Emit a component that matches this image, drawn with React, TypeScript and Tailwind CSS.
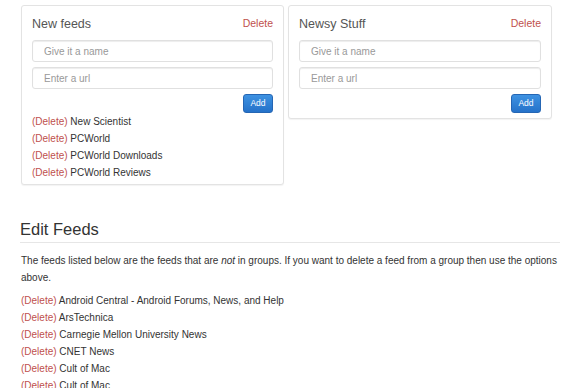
import React from "react";

const red = "text-[#c0504d]";

function Panel({ title, items }: { title: string; items: string[] }) {
  return (
    <div className="flex flex-col border border-[#e3e3e3] rounded-[3px] shadow-[0_1px_1px_rgba(0,0,0,0.05)] px-[10px] pt-[10px] bg-white w-full">
      <div className="flex items-center justify-between h-[16px]">
        <span className="text-[12.5px] text-[#555]">{title}</span>
        <span className={`text-[10.5px] ${red}`}>Delete</span>
      </div>
      <input
        className="mt-[8px] h-[22px] w-full border border-[#e0e0e0] rounded-[3px] shadow-[inset_0_1px_1px_rgba(0,0,0,0.075)] pl-[11px] text-[10px] placeholder:text-[#999] outline-none"
        placeholder="Give it a name"
      />
      <input
        className="mt-[5px] h-[22px] w-full border border-[#e0e0e0] rounded-[3px] shadow-[inset_0_1px_1px_rgba(0,0,0,0.075)] pl-[11px] text-[10px] placeholder:text-[#999] outline-none"
        placeholder="Enter a url"
      />
      <div className="flex justify-end mt-[5px]">
        <button className="h-[19px] w-[30px] rounded-[3px] border border-[#2566b4] bg-gradient-to-b from-[#3e92e2] to-[#2572c9] text-white text-[8.5px] leading-none">
          Add
        </button>
      </div>
      {items.length > 0 ? (
        <div className="flex flex-col pb-[3px]">
          {items.map((it, i) => (
            <div key={i} className="h-[17px] leading-[17px] text-[10px] text-[#333]">
              <span className={red}>(Delete)</span> {it}
            </div>
          ))}
        </div>
      ) : (
        <div className="h-[5px]" />
      )}
    </div>
  );
}

export default function App() {
  const feeds = [
    "Android Central - Android Forums, News, and Help",
    "ArsTechnica",
    "Carnegie Mellon University News",
    "CNET News",
    "Cult of Mac",
    "Cult of Mac",
  ];
  return (
    <div
      className="w-[580px] h-[388px] overflow-hidden bg-white text-[#333]"
      style={{ fontFamily: '"Liberation Sans", Arial, sans-serif' }}
    >
      <div className="px-[20px] pt-[5px]">
        <div className="flex items-start gap-[4px] ml-[1px]">
          <div className="w-[263px]">
            <Panel
              title="New feeds"
              items={["New Scientist", "PCWorld", "PCWorld Downloads", "PCWorld Reviews"]}
            />
          </div>
          <div className="w-[264px]">
            <Panel title="Newsy Stuff" items={[]} />
          </div>
        </div>
        <div className="mt-[34px] border-b border-[#e6e6e6] pb-[3px]">
          <h3 className="text-[16.5px] leading-[20px] text-[#333]">Edit Feeds</h3>
        </div>
        <p className="mt-[9px] text-[10px] leading-[17px] text-[#333] pl-[1px]">
          The feeds listed below are the feeds that are <em>not</em> in groups. If you want to delete a feed from a group then use the options above.
        </p>
        <div className="mt-[6px] flex flex-col pl-[1px]">
          {feeds.map((f, i) => (
            <div key={i} className="h-[17px] leading-[17px] text-[10px]">
              <span className={red}>(Delete)</span> {f}
            </div>
          ))}
        </div>
      </div>
    </div>
  );
}
